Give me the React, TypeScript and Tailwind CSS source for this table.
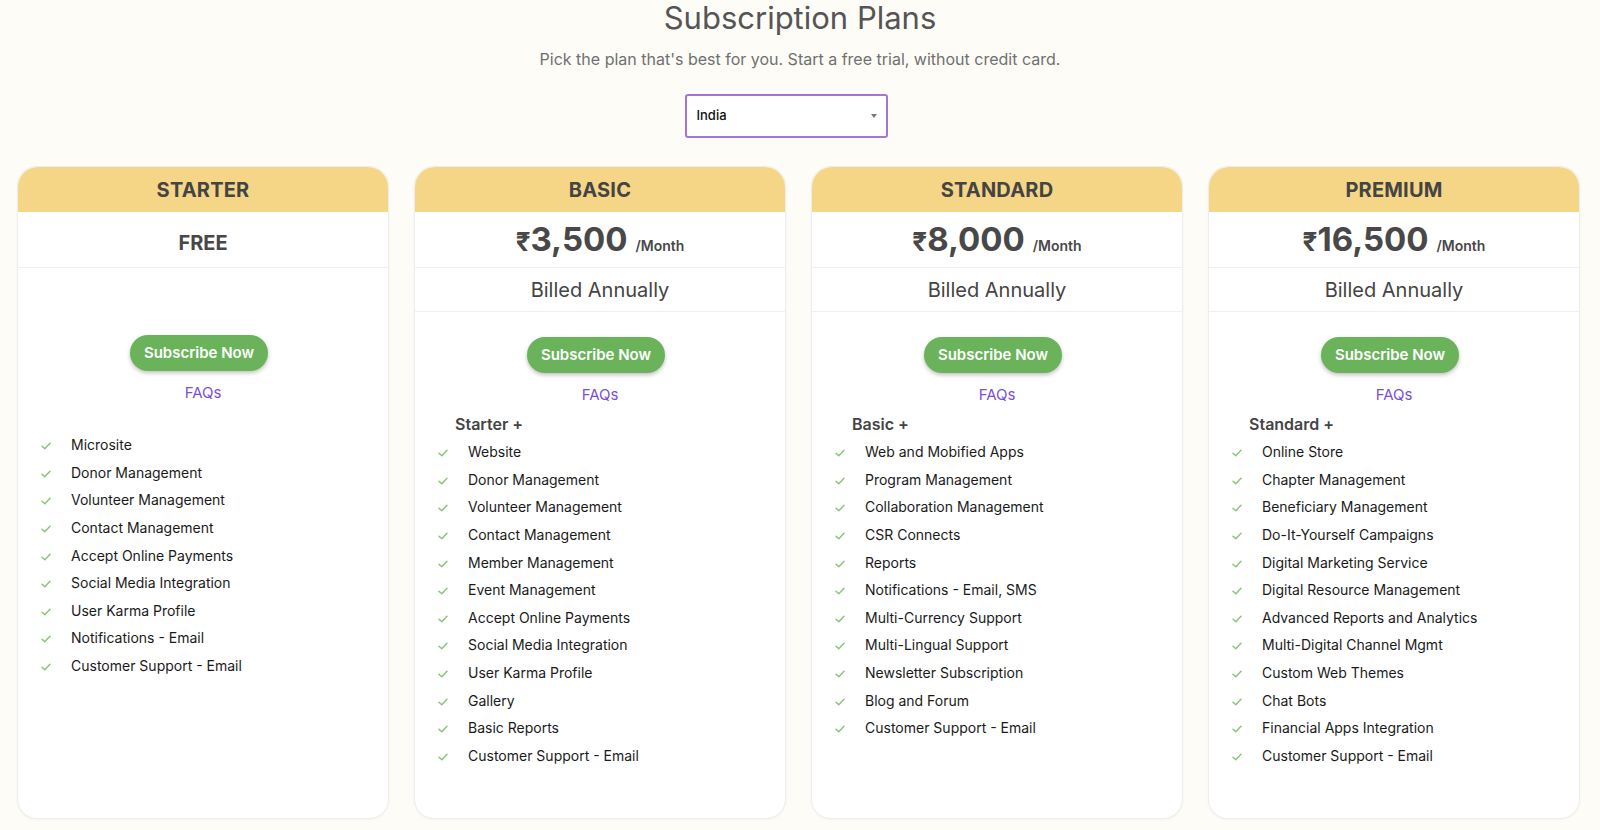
import React from "react";

type Plan = {
  name: string;
  price?: string;
  base?: string;
  features: string[];
};

const plans: Plan[] = [
  {
    name: "STARTER",
    features: [
      "Microsite",
      "Donor Management",
      "Volunteer Management",
      "Contact Management",
      "Accept Online Payments",
      "Social Media Integration",
      "User Karma Profile",
      "Notifications - Email",
      "Customer Support - Email",
    ],
  },
  {
    name: "BASIC",
    price: "3,500",
    base: "Starter +",
    features: [
      "Website",
      "Donor Management",
      "Volunteer Management",
      "Contact Management",
      "Member Management",
      "Event Management",
      "Accept Online Payments",
      "Social Media Integration",
      "User Karma Profile",
      "Gallery",
      "Basic Reports",
      "Customer Support - Email",
    ],
  },
  {
    name: "STANDARD",
    price: "8,000",
    base: "Basic +",
    features: [
      "Web and Mobified Apps",
      "Program Management",
      "Collaboration Management",
      "CSR Connects",
      "Reports",
      "Notifications - Email, SMS",
      "Multi-Currency Support",
      "Multi-Lingual Support",
      "Newsletter Subscription",
      "Blog and Forum",
      "Customer Support - Email",
    ],
  },
  {
    name: "PREMIUM",
    price: "16,500",
    base: "Standard +",
    features: [
      "Online Store",
      "Chapter Management",
      "Beneficiary Management",
      "Do-It-Yourself Campaigns",
      "Digital Marketing Service",
      "Digital Resource Management",
      "Advanced Reports and Analytics",
      "Multi-Digital Channel Mgmt",
      "Custom Web Themes",
      "Chat Bots",
      "Financial Apps Integration",
      "Customer Support - Email",
    ],
  },
];

const Check = () => (
  <svg width="10" height="8" viewBox="0 0 10 8" fill="none" className="shrink-0 mt-[3px]">
    <path d="M1 4.2L3.8 6.8L9 1.2" stroke="#8cc47c" strokeWidth="1.5" strokeLinecap="round" strokeLinejoin="round" />
  </svg>
);

const PlanCard = ({ plan }: { plan: Plan }) => {
  const free = !plan.price;
  return (
    <div className="h-[653px] bg-white border border-[#ededed] rounded-[20px] shadow-[0_1px_3px_rgba(0,0,0,0.04)] flex flex-col">
      {/* Header */}
      <div className="h-[45px] bg-[#f5d687] rounded-t-[20px] flex items-center justify-center text-[20px] font-bold text-[#444] tracking-[0.01em]">
        {plan.name}
      </div>

      {/* Price */}
      <div className={`h-[56px] border-b border-[#f0f0f0] flex items-center justify-center text-[#484848] ${free ? "pt-[7px]" : "pt-[3px]"}`}>
        {free ? (
          <span className="text-[20px] font-bold">FREE</span>
        ) : (
          <div className="flex items-baseline">
            <span className="text-[26px] font-bold">₹</span>
            <span className="text-[33px] font-bold leading-none">{plan.price}</span>
            <span className="text-[14px] font-semibold ml-[8px]">/Month</span>
          </div>
        )}
      </div>

      {free ? (
        <div className="h-[44px]" />
      ) : (
        <div className="h-[44px] border-b border-[#f0f0f0] flex items-center justify-center text-[20px] text-[#444]">
          Billed Annually
        </div>
      )}

      <div className="flex flex-col items-center">
        <button className={`${free ? "mt-[23px]" : "mt-[25px]"} mr-[8px] h-[36px] px-[14px] rounded-full bg-[#6ab35b] text-white text-[15px] font-semibold shadow-[0_2px_4px_rgba(0,0,0,0.25)]`}>
          Subscribe Now
        </button>
        <a className="mt-[11px] text-[15px] leading-[22px] text-[#7b4fd8]">FAQs</a>
      </div>

      {plan.base && (
        <div className="mt-[4px] pl-[40px] h-[28px] flex items-center text-[16px] font-semibold text-[#444]">
          {plan.base}
        </div>
      )}

      <ul className={free ? "mt-[27px]" : ""}>
        {plan.features.map((f) => (
          <li key={f} className="h-[27.6px] flex items-center pl-[23px] text-[14px] text-[#1a1a1a]">
            <Check />
            <span className="ml-[20px]">{f}</span>
          </li>
        ))}
      </ul>
    </div>
  );
};

export default function App() {
  return (
    <div className="min-h-screen bg-[#fdfcf7] font-['Inter','Noto_Sans',sans-serif]">
      <h1 className="text-center text-[31px] leading-[36px] text-[#555]">Subscription Plans</h1>
      <p className="mt-[11px] text-center text-[16px] leading-[24px] text-[#707070]">
        Pick the plan that's best for you. Start a free trial, without credit card.
      </p>

      <div className="mt-[23px] flex justify-center">
        <div className="mr-[28px] w-[203px] h-[44px] border-2 border-[#a674d8] rounded-[3px] bg-white flex items-center justify-between pl-[10px] pr-[9px]">
          <span className="text-[13px] font-medium text-[#111]">India</span>
          <svg width="6" height="4" viewBox="0 0 6 4">
            <path d="M0 0H6L3 4Z" fill="#777" />
          </svg>
        </div>
      </div>

      <div className="mt-[28px] pl-[17px] pr-[20px] grid grid-cols-4 gap-[25px]">
        {plans.map((p) => (
          <PlanCard key={p.name} plan={p} />
        ))}
      </div>
    </div>
  );
}
